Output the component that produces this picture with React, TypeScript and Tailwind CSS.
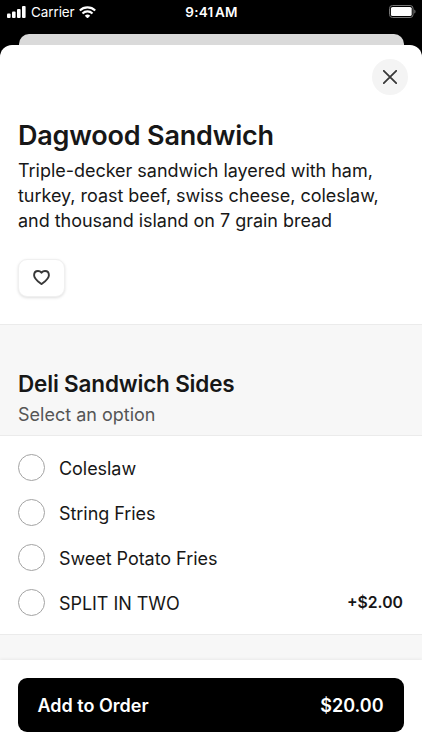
import { useState } from 'react';

interface SideOption {
  id: string;
  label: string;
  price?: string;
}

const OPTIONS: SideOption[] = [
  { id: 'coleslaw', label: 'Coleslaw' },
  { id: 'string-fries', label: 'String Fries' },
  { id: 'sweet-potato-fries', label: 'Sweet Potato Fries' },
  { id: 'split', label: 'SPLIT IN TWO', price: '+$2.00' },
];

function SignalIcon() {
  return (
    <svg width="19" height="12" viewBox="0 0 19 12" fill="currentColor">
      <rect x="0" y="7.6" width="3.6" height="4.4" rx="1" />
      <rect x="5" y="5.4" width="3.6" height="6.6" rx="1" />
      <rect x="10" y="3" width="3.6" height="9" rx="1" />
      <rect x="15" y="0" width="3.6" height="12" rx="1" />
    </svg>
  );
}

function WifiIcon() {
  return (
    <svg width="17" height="12.5" viewBox="0 0 17 12.5" fill="none" stroke="currentColor" strokeWidth="2.1">
      <path d="M.8 4.5a11 11 0 0 1 15.4 0" />
      <path d="M3.5 7.4a7.1 7.1 0 0 1 10 0" />
      <path d="M8.5 12.4 5.8 9.7a3.9 3.9 0 0 1 5.4 0z" fill="currentColor" stroke="none" />
    </svg>
  );
}

function BatteryIcon() {
  return (
    <svg width="27" height="13" viewBox="0 0 27 13" fill="none">
      <rect x=".5" y=".5" width="23.6" height="12" rx="3" stroke="#777" />
      <rect x="1.9" y="1.9" width="20.8" height="9.2" rx="1.7" fill="#fff" />
      <path d="M25.3 4.4c1.6.6 1.6 3.6 0 4.2z" fill="#777" />
    </svg>
  );
}

function StatusBar() {
  return (
    <div className="grid h-[34px] grid-cols-3 pt-[5px] pr-[6px] pl-[7px] text-white">
      <div className="flex h-[14px] items-center">
        <SignalIcon />
        <span className="ml-[5px] text-[13.5px] leading-[14px] tracking-[-0.1px]">Carrier</span>
        <span className="ml-[4px]">
          <WifiIcon />
        </span>
      </div>
      <div className="text-center text-[13.5px] leading-[14px] font-semibold tracking-[0.2px] whitespace-nowrap [word-spacing:-2px]">
        9:41 AM
      </div>
      <div className="flex h-[13px] items-center justify-end">
        <BatteryIcon />
      </div>
    </div>
  );
}

function OptionRow({ option, selected, onSelect }: { option: SideOption; selected: boolean; onSelect: () => void }) {
  return (
    <button
      type="button"
      role="radio"
      aria-checked={selected}
      onClick={onSelect}
      className="flex h-[45px] w-full items-center text-left"
    >
      <span className="flex size-[27px] items-center justify-center rounded-full border border-[#a3a3a3]">
        {selected && <span className="size-3.5 rounded-full bg-black" />}
      </span>
      <span className="ml-[14px] pt-px text-[18px] tracking-[-0.05px]">{option.label}</span>
      {option.price && <span className="ml-auto pt-px text-[15.75px] font-semibold">{option.price}</span>}
    </button>
  );
}

export default function App() {
  const [selectedId, setSelectedId] = useState<string | null>(null);
  const [liked, setLiked] = useState(false);

  return (
    <div className="flex h-[750px] w-[422px] flex-col overflow-hidden bg-black font-['Inter',sans-serif] text-[#171717]">
      <StatusBar />
      <div className="mr-[18px] ml-[19px] h-[11px] shrink-0 rounded-t-[10px] bg-[#dadada]" />

      <main className="flex min-h-0 flex-1 flex-col overflow-hidden rounded-t-[12px] bg-white">
        <div className="flex shrink-0 justify-end pt-[14px] pr-[14px]">
          <button
            type="button"
            aria-label="Close"
            className="flex size-[36px] items-center justify-center rounded-full bg-[#f4f4f4]"
          >
            <svg width="14" height="14" viewBox="0 0 14 14" fill="none" stroke="#383838" strokeWidth="1.8" strokeLinecap="round">
              <path d="m.8.8 12.4 12.4M13.2.8.8 13.2" />
            </svg>
          </button>
        </div>

        <section className="h-[229px] shrink-0 px-[18px] pt-[24px]">
          <h1 className="text-[27px] leading-[34px] font-semibold tracking-[-0.2px]">Dagwood Sandwich</h1>
          <p className="mt-[6px] text-[18px] leading-[24.75px] tracking-[-0.03px] whitespace-nowrap">
            Triple-decker sandwich layered with ham,
            <br />
            turkey, roast beef, swiss cheese, coleslaw,
            <br />
            and thousand island on 7 grain bread
          </p>
          <button
            type="button"
            aria-label="Favorite"
            onClick={() => setLiked(!liked)}
            className="mt-[26px] flex h-[38px] w-[47px] items-center justify-center rounded-[9px] border border-[#f0f0f0] bg-white shadow-[0_1px_3px_rgba(0,0,0,0.13)]"
          >
            <svg
              width="17"
              height="15"
              viewBox="0 0 17 15"
              fill={liked ? '#383838' : 'none'}
              stroke="#383838"
              strokeWidth="1.9"
              strokeLinejoin="round"
              className="mb-px"
            >
              <path d="M8.5 14C5.6 11.8 1.1 9 1.1 5.2 1.1 2.7 2.8 1 5 1c1.4 0 2.6.6 3.5 1.8C9.4 1.6 10.6 1 12 1c2.2 0 3.9 1.7 3.9 4.2 0 3.8-4.5 6.6-7.4 8.8z" />
            </svg>
          </button>
        </section>

        <section className="h-[112px] shrink-0 border-y border-[#ebebeb] bg-[#f7f7f7] px-[18px] pt-[45px]">
          <h2 className="text-[22.5px] leading-[28px] font-semibold tracking-[-0.18px]">Deli Sandwich Sides</h2>
          <p className="mt-[4px] text-[18px] leading-[25px] text-[#555]">Select an option</p>
        </section>

        <div role="radiogroup" className="h-[198px] shrink-0 pt-[9px] pr-[19px] pl-[18px]">
          {OPTIONS.map(option => (
            <OptionRow
              key={option.id}
              option={option}
              selected={option.id === selectedId}
              onSelect={() => setSelectedId(option.id)}
            />
          ))}
        </div>

        <div className="h-[26px] shrink-0 border-t border-[#ebebeb] bg-[#f7f7f7]" />

        <footer className="relative flex-1 bg-white px-[18px] pt-[18px] shadow-[0_-1px_3px_rgba(0,0,0,0.06)]">
          <button
            type="button"
            className="flex h-[54px] w-full items-center justify-between rounded-[9px] bg-black pr-[20.5px] pl-[19.5px] text-[18px] font-semibold text-white"
          >
            <span>Add to Order</span>
            <span>$20.00</span>
          </button>
        </footer>
      </main>
    </div>
  );
}
